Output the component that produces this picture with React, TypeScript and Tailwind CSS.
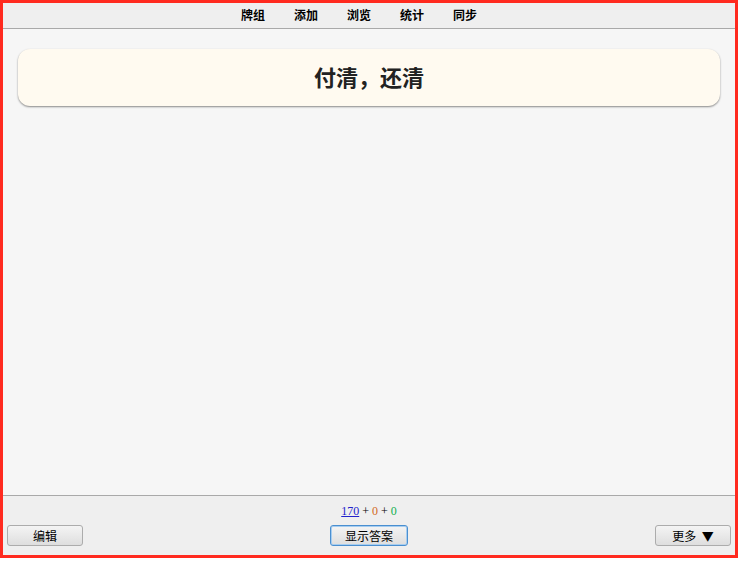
export default function App() {
    const nav = ["牌组", "添加", "浏览", "统计", "同步"];
    const btn =
        "h-[21px] rounded-[3px] border bg-gradient-to-b from-[#f4f4f4] to-[#dedede] text-[12px] leading-none text-black";
    return (
        <div className="h-[561px] w-[739px] bg-white font-['Noto_Sans_CJK_SC',sans-serif]">
            <div className="flex h-[558px] w-[738px] flex-col border-[3px] border-[#ff2a1f] bg-[#f6f6f6]">
                {/* Top menu */}
                <div className="flex h-[26px] shrink-0 items-center justify-center gap-[29px] border-b border-[#a9a9a9] bg-[#efefef] pr-[20px] pb-[2px]">
                    {nav.map((n) => (
                        <span key={n} className="text-[12px] font-bold leading-none text-black">
                            {n}
                        </span>
                    ))}
                </div>

                {/* Card area */}
                <div className="flex-1 px-[15px] pt-[20px]">
                    <div className="flex h-[57px] items-center justify-center rounded-[12px] bg-[#fffaf0] pb-[4px] shadow-[0_1px_2px_rgba(0,0,0,0.45)]">
                        <span className="text-[22px] font-bold leading-none text-[#222]">付清，还清</span>
                    </div>
                </div>

                {/* Bottom bar */}
                <div className="flex h-[60px] shrink-0 flex-col border-t border-[#a9a9a9] bg-[#efefef] px-[4px]">
                    <div className="mt-[8px] flex justify-center gap-[3px] font-['Liberation_Serif',serif] text-[12px] leading-[14px]">
                        <span className="text-[#2222cc] underline">170</span>
                        <span className="text-black">+</span>
                        <span className="text-[#d2691e]">0</span>
                        <span className="text-black">+</span>
                        <span className="text-[#10b050]">0</span>
                    </div>
                    <div className="mt-[7px] flex items-center justify-between">
                        <button className={`${btn} w-[76px] border-[#acacac]`}>编辑</button>
                        <button className={`${btn} w-[78px] border-[#4a8fd0] ring-1 ring-inset ring-[#a6cdf0]`}>
                            显示答案
                        </button>
                        <button className={`${btn} w-[76px] border-[#acacac]`}>更多&nbsp;&nbsp;▼</button>
                    </div>
                </div>
            </div>
        </div>
    );
}
